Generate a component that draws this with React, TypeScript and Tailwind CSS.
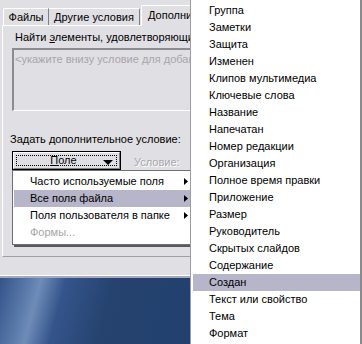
import { Fragment } from 'react';

const FIELDS = [
  'Группа',
  'Заметки',
  'Защита',
  'Изменен',
  'Клипов мультимедиа',
  'Ключевые слова',
  'Название',
  'Напечатан',
  'Номер редакции',
  'Организация',
  'Полное время правки',
  'Приложение',
  'Размер',
  'Руководитель',
  'Скрытых слайдов',
  'Содержание',
  'Создан',
  'Текст или свойство',
  'Тема',
  'Формат',
];

const GROUPS = [
  { label: 'Часто используемые поля', sub: true },
  { label: 'Все поля файла', sub: true, active: true },
  { label: 'Поля пользователя в папке', sub: true },
  { label: 'Формы...', disabled: true },
];

function Arrow() {
  return (
    <svg width="4" height="7" viewBox="0 0 4 7" className="shrink-0">
      <path d="M0 0 L4 3.5 L0 7 Z" fill="#000" />
    </svg>
  );
}

export default function App() {
  return (
    <div className="flex h-[344px] w-[362px] overflow-hidden font-['Liberation_Sans',Arial,sans-serif] text-[11px] leading-[13px] text-black">
      {/* Dialog on the left */}
      <div className="relative flex h-full w-[190px] shrink-0 flex-col overflow-hidden bg-[#e0dfe3]">
        {/* Tabs */}
        <div className="flex h-[25px] items-end pl-[3px]">
          <div className="flex h-[17px] w-[46px] shrink-0 items-center justify-center whitespace-nowrap rounded-tl-[2px] border-t border-l border-r border-t-white border-l-white border-r-[#808080]">
            Файлы
          </div>
          <div className="flex h-[17px] w-[91px] shrink-0 items-center justify-center whitespace-nowrap rounded-tr-[2px] border-t border-r border-t-white border-r-[#808080]">
            Другие условия
          </div>
          <div className="relative z-10 ml-[1px] mb-[-1px] flex h-[21px] w-[80px] shrink-0 items-start whitespace-nowrap rounded-tl-[2px] border-t border-l border-t-white border-l-white bg-[#e0dfe3] pl-[6px] pt-[3px]">
            Дополнительно
          </div>
        </div>

        {/* Panel */}
        <div className="relative ml-[2px] h-[232px] w-[200px] shrink-0 border-t border-l border-b border-t-white border-l-white border-b-[#a0a0a0]">
          <p className="mt-[5px] whitespace-nowrap pl-[12px]">
            Найти <span className="underline">э</span>лементы, удовлетворяющим условиям:
          </p>
          <div className="mt-[4px] ml-[9px] h-[63px] w-[200px] overflow-hidden border-t-2 border-l-2 border-b border-t-[#8c8c8f] border-l-[#8c8c8f] border-b-white bg-[#e0dfe3] pl-[1px] pt-[3px]">
            <span className="whitespace-nowrap text-[#a7a6aa]">
              &lt;укажите внизу условие для добавления&gt;
            </span>
          </div>
          <p className="mt-[22px] whitespace-nowrap pl-[7px]">Задать дополнительное условие:</p>

          {/* Button row with open menu */}
          <div className="relative mt-[5px] flex h-[19px] items-end pl-[9px]">
            <div className="h-[19px] w-[109px] border border-black">
              <div className="flex h-full w-full items-center border-t border-l border-r border-b border-t-white border-l-white border-r-[#808080] border-b-[#808080] p-[2px]">
                <div className="relative flex h-full w-full items-center justify-center border border-dotted border-black">
                  <span className="mr-[6px]">
                    <span className="underline">П</span>оле
                  </span>
                  <svg width="10" height="5" viewBox="0 0 10 5" className="absolute right-[3px] top-[4px]">
                    <path d="M0 0 H10 L5 5 Z" fill="#000" />
                  </svg>
                </div>
              </div>
            </div>
            <span className="ml-[13px] mb-[1px] text-[#a7a6aa] [text-shadow:1px_1px_0_#fff]">Условие:</span>

            {/* Popup menu */}
            <div className="absolute left-[9px] top-[19px] z-20 w-[200px] border border-[#6f6f73] bg-white pl-[1px] pt-[2px] pb-[3px] shadow-[2px_2px_0_#5a5a5e]">
              {GROUPS.map((g) => (
                <div
                  key={g.label}
                  className={
                    'flex h-[17px] items-center pl-[16px] ' +
                    (g.active ? 'bg-[#b6b5ca] ' : '') +
                    (g.disabled ? 'text-[#a7a6aa]' : '')
                  }
                >
                  <span className="w-[154px] whitespace-nowrap">{g.label}</span>
                  {g.sub && <Arrow />}
                </div>
              ))}
            </div>
          </div>
        </div>

        <div className="h-[18px] w-full shrink-0" />
        <div className="h-[3px] w-full shrink-0 border-t border-b-2 border-t-white border-b-[#a9a8bb]" />
        {/* Desktop behind */}
        <div className="flex-1 bg-[linear-gradient(105deg,#34538a_0%,#5a7aaa_14%,#6f8cb8_20%,#34558c_32%,#26436f_55%,#22406e_100%)]" />
      </div>

      {/* Submenu with all file fields */}
      <div className="h-full w-[172px] shrink-0 border-l border-r-2 border-l-[#9d9da1] border-r-[#8a8a8e] bg-white pt-[2px] pl-[2px]">
        {FIELDS.map((f) => (
          <Fragment key={f}>
            <div
              className={
                'flex h-[17px] items-center whitespace-nowrap pl-[16px] ' +
                (f === 'Создан' ? 'bg-[#b6b5ca]' : '')
              }
            >
              {f}
            </div>
          </Fragment>
        ))}
      </div>
    </div>
  );
}
